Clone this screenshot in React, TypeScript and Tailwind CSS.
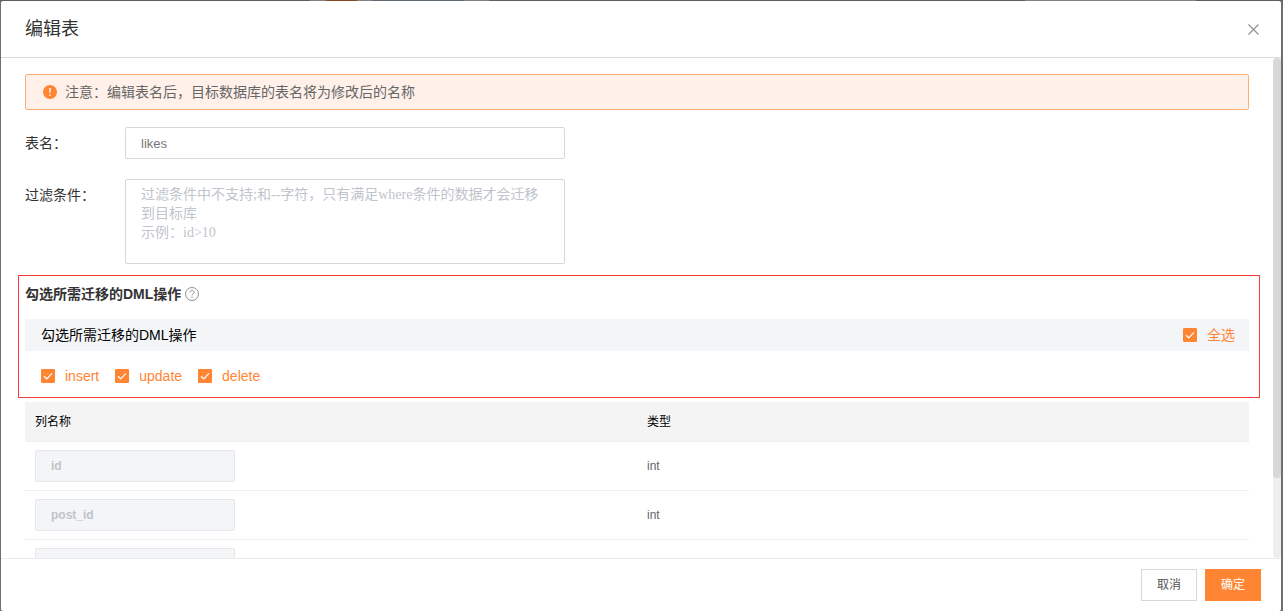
import { useState } from "react";

const OPERATIONS = ["insert", "update", "delete"];

const COLUMNS = [
    { name: "id", type: "int" },
    { name: "post_id", type: "int" },
    { name: "", type: "" },
];

interface CheckProps {
    id: string;
    label: string;
    checked: boolean;
    onChange: () => void;
}

function Check({ id, label, checked, onChange }: CheckProps) {
    return (
        <label htmlFor={id} className="flex items-center gap-[10px] text-sm text-[#ff8533] cursor-pointer">
            <span className="relative flex size-[14px]">
                <input
                    id={id}
                    type="checkbox"
                    checked={checked}
                    onChange={onChange}
                    className="size-[14px] appearance-none rounded-[1px] border border-[#d8d8d8] bg-white checked:border-[#ff8533] checked:bg-[#ff8533]"
                />
                <svg viewBox="0 0 14 14" className="pointer-events-none absolute inset-0 size-[14px]" fill="none" stroke="#fff" strokeWidth="1.2">
                    <path d="M3 7.2 5.7 9.8 11 4.4" />
                </svg>
            </span>
            {label}
        </label>
    );
}

// Sliver of the dimmed page that stays visible above the dialog
function Backdrop() {
    return (
        <div className="flex h-px shrink-0 bg-[#5f5d5f]">
            <span className="ml-[24.2%] w-[1.2%] bg-[#848284]" />
            <span className="w-[2.4%] bg-[#8a4a22]" />
            <span className="w-[1.2%] bg-[#848284]" />
            <span className="w-[7.2%] bg-[#5f6a72]" />
            <span className="w-[1.9%] bg-[#848284]" />
            <span className="ml-[41.8%] w-[13.3%] bg-[#848284]" />
        </div>
    );
}

export default function App() {
    const [tableName, setTableName] = useState("likes");
    const [filter, setFilter] = useState("");
    const [selected, setSelected] = useState<string[]>(OPERATIONS);

    const allSelected = selected.length === OPERATIONS.length;

    const toggle = (op: string) => {
        setSelected(selected.includes(op) ? selected.filter((s) => s !== op) : [...selected, op]);
    };

    return (
        <div className="flex h-screen flex-col bg-[#706e70] font-['Liberation_Sans','Noto_Sans_CJK_SC',sans-serif]">
            <Backdrop />
            <div role="dialog" aria-labelledby="dialog-title" className="ml-px mr-0.5 flex min-h-0 flex-1 flex-col rounded-xs bg-white">
                <header className="flex h-[57px] shrink-0 items-center justify-between border-b border-[#d8d8d8] pl-6 pr-[22px]">
                    <h1 id="dialog-title" className="text-lg text-[#333]">编辑表</h1>
                    <button type="button" aria-label="关闭" className="text-[#8f9399]">
                        <svg viewBox="0 0 11 11" className="size-[11px]" fill="none" stroke="currentColor" strokeWidth="1.2">
                            <path d="M.5.5l10 10M10.5.5l-10 10" />
                        </svg>
                    </button>
                </header>

                <div className="flex min-h-0 flex-1">
                    <main className="min-w-0 flex-1 overflow-hidden px-6 pt-4">
                        <div role="alert" className="flex h-9 items-center gap-2 rounded-xs border border-[#fcae76] bg-[#fff1ea] px-[17px] text-sm text-[#666]">
                            <svg viewBox="0 0 14 14" className="size-[14px] shrink-0">
                                <circle cx="7" cy="7" r="7" fill="#ff8533" />
                                <path d="M6.1 3h1.8l-.3 5H6.4z" fill="#fff1ea" />
                                <circle cx="7" cy="10.1" r=".9" fill="#fff1ea" />
                            </svg>
                            <p>注意：编辑表名后，目标数据库的表名将为修改后的名称</p>
                        </div>

                        <div className="mt-[17px] flex">
                            <label htmlFor="table-name" className="w-[100px] text-sm leading-8 text-[#333]">表名：</label>
                            <input
                                id="table-name"
                                value={tableName}
                                onChange={(e) => setTableName(e.target.value)}
                                className="h-8 w-[440px] rounded-xs border border-[#d8d8d8] px-[15px] text-[13px] text-[#777] outline-none"
                            />
                        </div>

                        <div className="mt-5 flex">
                            <label htmlFor="filter" className="w-[100px] text-sm leading-8 text-[#333]">过滤条件：</label>
                            <textarea
                                id="filter"
                                value={filter}
                                onChange={(e) => setFilter(e.target.value)}
                                placeholder={"过滤条件中不支持;和--字符，只有满足where条件的数据才会迁移到目标库\n示例：id>10"}
                                className="h-[85px] w-[440px] resize-none rounded-xs border border-[#d8d8d8] px-[15px] py-[5px] font-['Liberation_Serif','Noto_Sans_CJK_SC',serif] text-sm leading-[19px] outline-none placeholder:text-[#c0c4cc]"
                            />
                        </div>

                        <section className="-ml-[7px] -mr-[11px] mt-[11px] border border-[#f93a3a] pb-[11px] pl-[6px] pr-[10px] pt-2">
                            <h2 className="flex h-5 items-center gap-1 text-sm font-bold text-[#333]">
                                勾选所需迁移的DML操作
                                <svg viewBox="0 0 14 14" className="size-[14px]" fill="none" stroke="#8f8f8f">
                                    <circle cx="7" cy="7" r="6.5" />
                                    <path d="M4.9 5.5C4.9 4.1 5.8 3.4 7 3.4s2.1.7 2.1 1.9C9.1 6.8 7 6.8 7 8.5" />
                                    <path d="M7 9.6v1.3" />
                                </svg>
                            </h2>
                            <div className="mt-[15px] flex h-8 items-center justify-between bg-[#f4f5f7] pl-4 pr-[14px] text-sm text-black">
                                <span>勾选所需迁移的DML操作</span>
                                <Check
                                    id="op-all"
                                    label="全选"
                                    checked={allSelected}
                                    onChange={() => setSelected(allSelected ? [] : OPERATIONS)}
                                />
                            </div>
                            <div className="mt-[15px] flex h-5 items-center gap-4 pl-4">
                                {OPERATIONS.map((op) => (
                                    <Check key={op} id={`op-${op}`} label={op} checked={selected.includes(op)} onChange={() => toggle(op)} />
                                ))}
                            </div>
                        </section>

                        <table className="mt-1 w-full table-fixed border-separate border-spacing-0 text-left text-xs">
                            <thead>
                                <tr className="h-10 bg-[#f4f4f4] text-black">
                                    <th className="border-b border-[#ebeef5] px-[10px] font-normal">列名称</th>
                                    <th className="border-b border-[#ebeef5] px-[10px] font-normal">类型</th>
                                </tr>
                            </thead>
                            <tbody>
                                {COLUMNS.map((col, i) => (
                                    <tr key={i} className="text-[#666]">
                                        <td className="border-b border-[#ebeef5] px-[10px] py-2">
                                            <input
                                                aria-label="列名称"
                                                value={col.name}
                                                disabled
                                                className="block h-8 w-[200px] rounded-xs border border-[#e4e7ed] bg-[#f4f5f7] px-[15px] text-xs font-bold text-[#c0c4cc]"
                                            />
                                        </td>
                                        <td className="border-b border-[#ebeef5] px-[10px]">{col.type}</td>
                                    </tr>
                                ))}
                            </tbody>
                        </table>
                    </main>

                    <div className="w-2 shrink-0 rounded-full bg-[#eee]">
                        <div className="h-[84%] rounded-full bg-[#d8d8d8]" />
                    </div>
                </div>

                <footer className="flex h-[53px] shrink-0 items-center justify-end gap-2 border-t border-[#ebebeb] px-5 text-xs">
                    <button type="button" className="h-8 w-14 border border-[#d8d8d8] bg-white text-[#555]">取消</button>
                    <button type="button" className="h-8 w-14 bg-[#ff8533] text-white">确定</button>
                </footer>
            </div>
        </div>
    );
}
